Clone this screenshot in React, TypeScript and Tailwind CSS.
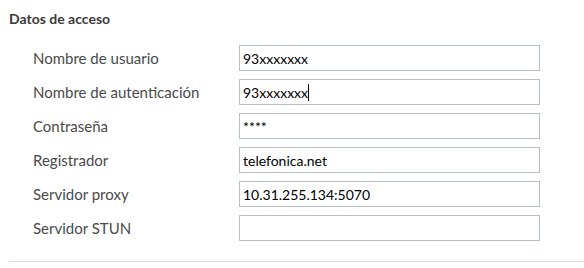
import React from 'react';

const fields = [
  { label: 'Nombre de usuario', value: '93xxxxxxx' },
  { label: 'Nombre de autenticación', value: '93xxxxxxx', caret: true },
  { label: 'Contraseña', value: '****' },
  { label: 'Registrador', value: 'telefonica.net' },
  { label: 'Servidor proxy', value: '10.31.255.134:5070' },
  { label: 'Servidor STUN', value: '' },
];

const App: React.FC = () => {
  return (
    <div
      className="w-[584px] h-[268px] bg-white text-[#333] overflow-hidden"
      style={{ fontFamily: 'Lato, "Open Sans", sans-serif' }}
    >
      <div className="pl-[9px] pt-[11px]">
        <h3 className="text-[14px] font-bold leading-[16px] text-[#3a3a3a]">Datos de acceso</h3>

        <div className="mt-[18px] flex flex-col gap-[8px]">
          {fields.map((f) => (
            <div key={f.label} className="flex items-center h-[26px]">
              <span className="w-[230px] pl-[24px] text-[15px] text-[#4a4a4a]">{f.label}</span>
              <div className="w-[301px] h-[26px] border border-[#b4c0c6] bg-white flex items-center px-[3px] text-[14px] text-black">
                <span>{f.value}</span>
                {f.caret && <span className="w-px h-[17px] bg-black" />}
              </div>
            </div>
          ))}
        </div>

        <div className="mt-[20px] h-px bg-[#dcdcdc]" />
      </div>
    </div>
  );
};

export default App;
